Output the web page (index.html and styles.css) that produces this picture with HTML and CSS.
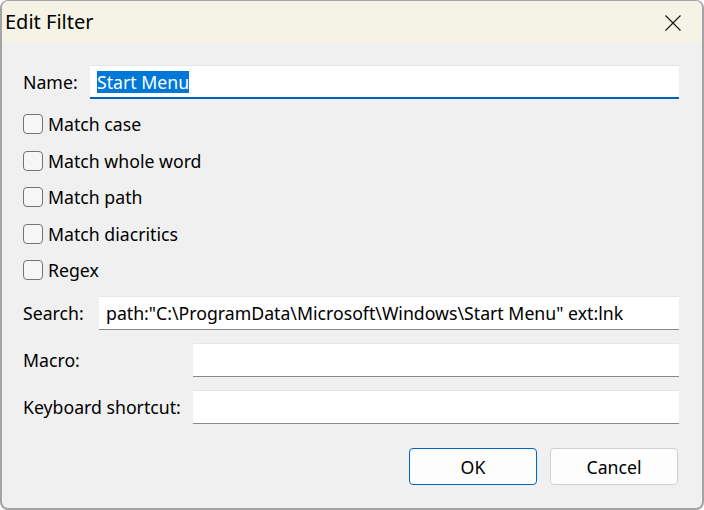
FILE: index.html
```html
<!DOCTYPE html>
<html>
<head>
<meta charset="utf-8">
<link rel="stylesheet" href="styles.css">
</head>
<body>
<div class="window">
  <div class="titlebar">
    <span class="title">Edit Filter</span>
    <svg class="close" width="18" height="18" viewBox="0 0 18 18"><path d="M1.5 1.5 L16.5 16.5 M16.5 1.5 L1.5 16.5" stroke="#1a1a1a" stroke-width="1.2" fill="none"/></svg>
  </div>
  <div class="content">
    <div class="row name-row">
      <span class="label">Name:</span>
      <div class="field focused"><span class="sel">Start Menu</span></div>
    </div>
    <div class="checks">
      <div class="check"><span class="box"></span><span>Match case</span></div>
      <div class="check"><span class="box"></span><span>Match whole word</span></div>
      <div class="check"><span class="box"></span><span>Match path</span></div>
      <div class="check"><span class="box"></span><span>Match diacritics</span></div>
      <div class="check"><span class="box"></span><span>Regex</span></div>
    </div>
    <div class="row search-row">
      <span class="label">Search:</span>
      <div class="field">path:"C:\ProgramData\Microsoft\Windows\Start Menu" ext:lnk</div>
    </div>
    <div class="grid">
      <span class="label">Macro:</span>
      <div class="field"></div>
      <span class="label">Keyboard shortcut:</span>
      <div class="field"></div>
    </div>
    <div class="buttons">
      <div class="btn primary">OK</div>
      <div class="btn">Cancel</div>
    </div>
  </div>
</div>
</body>
</html>
```
FILE: styles.css
```css
html, body {
  margin: 0;
  padding: 0;
  background: #ffffff;
}
body {
  font-family: "Noto Sans", "Open Sans", sans-serif;
  font-size: 17.7px;
  color: #000;
}
.window {
  width: 704px;
  height: 510px;
  box-sizing: border-box;
  border: 1px solid #a4a4a4;
  border-left-width: 2px;
  border-right-width: 2px;
  border-bottom-width: 2px;
  border-radius: 8px;
  background: #f0f0f0;
  overflow: hidden;
  display: flex;
  flex-direction: column;
}
.titlebar {
  height: 42px;
  flex: none;
  background: #f5f3e5;
  display: flex;
  align-items: center;
  justify-content: space-between;
  padding: 0 20px 0 3px;
}
.title {
  font-size: 20px;
  color: #000;
  margin-top: -1px;
}
.close {
  display: block;
  margin-top: 1px;
}
.content {
  flex: 1;
  padding: 22px 23px 0 21px;
  display: flex;
  flex-direction: column;
}
.row {
  display: flex;
  align-items: center;
}
.label {
  white-space: nowrap;
}
.field {
  flex: 1;
  height: 34px;
  box-sizing: border-box;
  background: #fff;
  border-top: 1px solid #e6e6e6;
  border-bottom: 1px solid #8a8a8a;
  display: flex;
  align-items: center;
  padding: 0 7px;
  white-space: nowrap;
  overflow: hidden;
}
.name-row .label {
  width: 67px;
  flex: none;
}
.field.focused {
  border-bottom: 2px solid #005fb8;
}
.sel {
  background: #0078d7;
  color: #fff;
  line-height: 22px;
  margin-top: 1px;
}
.checks {
  margin-top: 7px;
  display: flex;
  flex-direction: column;
}
.check {
  height: 36.5px;
  display: flex;
  align-items: center;
  gap: 5px;
}
.box {
  width: 20px;
  height: 20px;
  box-sizing: border-box;
  border: 1px solid #747474;
  border-radius: 4px;
  background: #f6f6f6;
  flex: none;
}
.search-row {
  margin-top: 7.5px;
}
.search-row .label {
  width: 76px;
  flex: none;
}
.grid {
  margin-top: 13px;
  display: grid;
  grid-template-columns: 170px 1fr;
  row-gap: 13px;
  align-items: center;
}
.buttons {
  margin-top: 24px;
  display: flex;
  justify-content: flex-end;
  gap: 13px;
  padding-right: 1px;
}
.btn {
  width: 128px;
  height: 37px;
  box-sizing: border-box;
  border: 1px solid #d0d0d0;
  border-radius: 4px;
  background: #fdfdfd;
  display: flex;
  align-items: center;
  justify-content: center;
}
.btn.primary {
  border-color: #0067c0;
}
```
